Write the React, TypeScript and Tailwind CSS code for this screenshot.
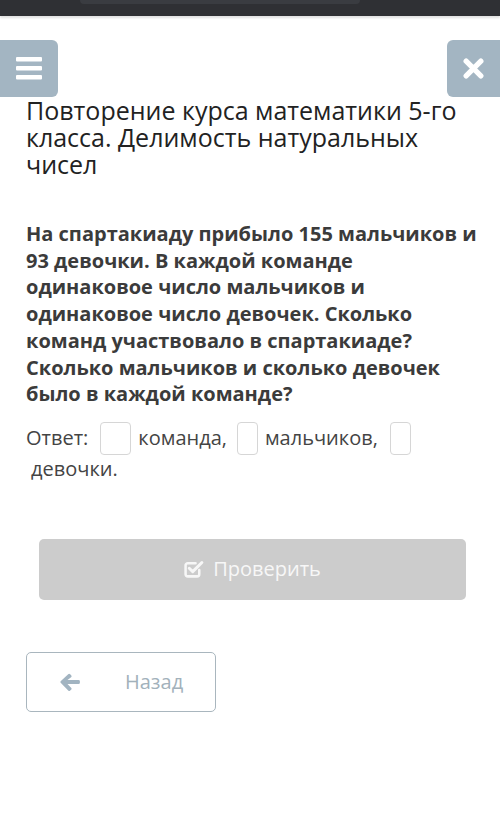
export default function App() {
  return (
    <div className="min-h-[834px] bg-white font-['Open_Sans',sans-serif]">
      {/* Status bar */}
      <div className="h-[16px] bg-[#2f3034] shadow-[0_2px_2px_rgba(0,0,0,0.12)]">
        <div className="ml-[80px] h-[4px] w-[280px] rounded-b-full bg-[#3a3c41]" />
      </div>

      {/* Top buttons */}
      <div className="mt-[24px] flex justify-between">
        <button className="flex h-[57px] w-[58px] items-center justify-center rounded-r-md bg-[#a3b5c2]">
          <svg width="26" height="23" viewBox="0 0 26 23" fill="#fff">
            <rect x="0" y="0" width="26" height="4.5" rx="1" />
            <rect x="0" y="9" width="26" height="4.5" rx="1" />
            <rect x="0" y="18" width="26" height="4.5" rx="1" />
          </svg>
        </button>
        <button className="flex h-[57px] w-[53px] items-center justify-center rounded-l-md bg-[#a3b5c2] pr-[1px]">
          <svg width="21" height="21" viewBox="0 0 20 20">
            <path d="M3 3 L17 17 M17 3 L3 17" stroke="#fff" strokeWidth="5" strokeLinecap="round" />
          </svg>
        </button>
      </div>

      <div className="px-[26px]">
        <h1 className="text-[25px] leading-[27px] font-normal text-[#222]">
          Повторение курса математики 5-го класса. Делимость натуральных чисел
        </h1>

        <p className="mt-[43px] w-[462px] text-[20px] leading-[26.7px] font-bold text-[#3b3b3b]">
          На спартакиаду прибыло 155 мальчиков и<br />
          93 девочки. В каждой команде<br />
          одинаковое число мальчиков и<br />
          одинаковое число девочек. Сколько<br />
          команд участвовало в спартакиаде?<br />
          Сколько мальчиков и сколько девочек<br />
          было в каждой команде?
        </p>

        {/* Answer */}
        <div className="mt-[14px] text-[20px] text-[#444]">
          <div className="flex h-[33px] items-center">
            <span>Ответ:</span>
            <span className="ml-[12px] h-[33px] w-[31px] rounded-[4px] border border-[#d6d6d6]" />
            <span className="ml-[7px]">команда,</span>
            <span className="ml-[10px] h-[33px] w-[21px] rounded-[4px] border border-[#d6d6d6]" />
            <span className="ml-[7px]">мальчиков,</span>
            <span className="ml-[12px] h-[33px] w-[21px] rounded-[4px] border border-[#d6d6d6]" />
          </div>
          <div className="ml-[5px] leading-[28px]">девочки.</div>
        </div>
      </div>

      {/* Check button */}
      <div className="mt-[56px] pl-[39px] pr-[34px]">
        <button className="flex h-[61px] w-full items-center justify-center gap-[9px] rounded-[5px] bg-[#cccccc] text-[20px] text-[#f7f7f7]">
          <svg className="shrink-0" width="20" height="18" viewBox="0 0 19 17" fill="none">
            <path
              d="M14.5 9.5 V13.5 a2 2 0 0 1 -2 2 H3.5 a2 2 0 0 1 -2 -2 V5 a2 2 0 0 1 2 -2 H11"
              stroke="#f7f7f7"
              strokeWidth="2.4"
              strokeLinecap="round"
            />
            <path d="M5 7.8 L8.3 11 L17 2.3" stroke="#f7f7f7" strokeWidth="2.8" strokeLinecap="round" strokeLinejoin="round" />
          </svg>
          <span>Проверить</span>
        </button>
      </div>

      {/* Back button */}
      <div className="mt-[52px] pl-[26px]">
        <button className="flex h-[60px] w-[190px] items-center rounded-[5px] border-[1.5px] border-[#a9b6be] text-[20px] text-[#a2b1bb]">
          <svg className="ml-[33px] shrink-0" width="20" height="18" viewBox="0 0 20 17" fill="#a2b4c1">
            <path d="M8.2 0.8 a1.4 1.4 0 0 1 2 0 l0.9 0.9 a1.4 1.4 0 0 1 0 2 L7.5 6.4 H18.5 a1.4 1.4 0 0 1 1.4 1.4 v1.4 a1.4 1.4 0 0 1 -1.4 1.4 H7.5 l3.6 3.6 a1.4 1.4 0 0 1 0 2 l-0.9 0.9 a1.4 1.4 0 0 1 -2 0 L0.9 9.5 a1.4 1.4 0 0 1 0 -2 Z" />
          </svg>
          <span className="ml-[45px]">Назад</span>
        </button>
      </div>
    </div>
  );
}
